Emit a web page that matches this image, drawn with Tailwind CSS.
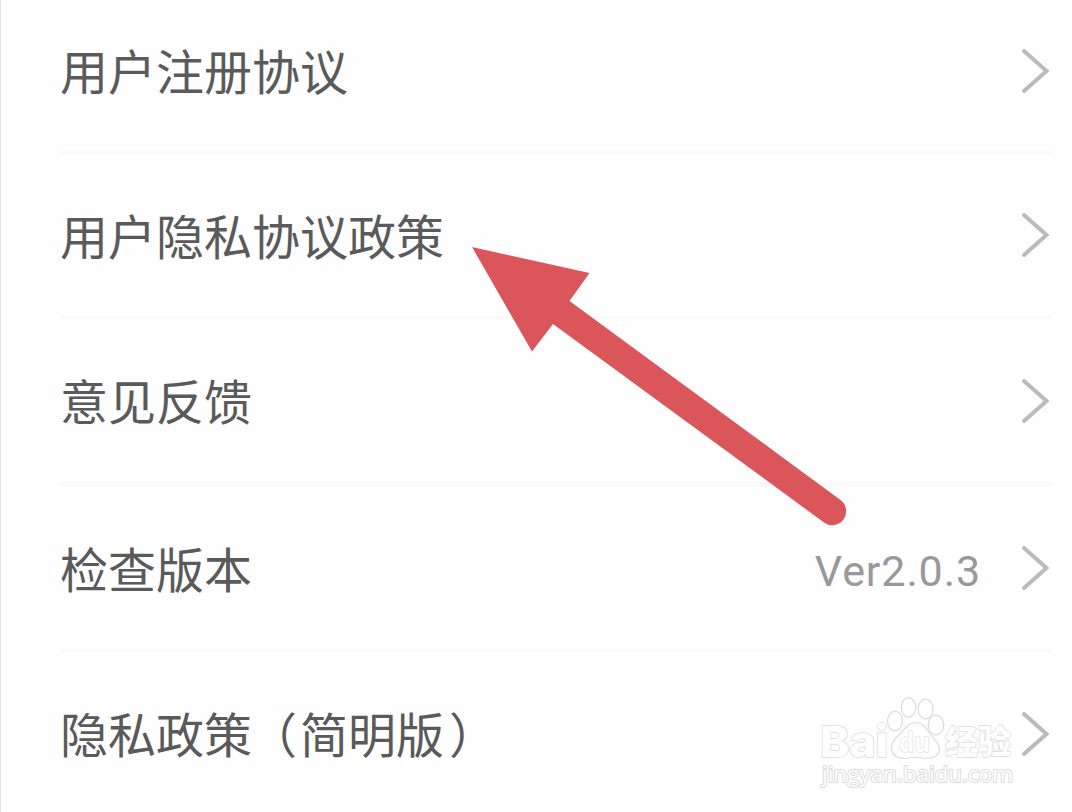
<!DOCTYPE html>
<html lang="zh-CN">
<head>
    <meta charset="UTF-8">
    <meta name="viewport" content="width=device-width, initial-scale=1.0">
    <title>设置</title>
    <script src="https://cdn.jsdelivr.net/npm/@tailwindcss/browser@4"></script>
</head>
<body class="bg-[#fefefe] overflow-hidden font-['Noto_Sans_CJK_SC',sans-serif]">
    <main class="relative h-[812px] w-[1072px] overflow-hidden border-l border-[#e4e4e4]">
        <ul class="pl-[59px] pr-5 text-[48px] leading-none text-[#5a5a5a]">
            <li class="flex h-[154px] items-center justify-between border-b-3 border-[#f9f9f9] pb-[10px]">
                <span class="pb-[3px]">用户注册协议</span>
                <svg class="mr-0.5 h-12 w-8" viewBox="0 0 32 48" fill="none" stroke="#bbbbbb" stroke-width="4" stroke-linecap="round"><path d="M6 4L28.500 24L6 44"/></svg>
            </li>
            <li class="flex h-[165px] items-center justify-between border-b-3 border-[#f9f9f9]">
                <span class="pb-[3px]">用户隐私协议政策</span>
                <svg class="mr-0.5 h-12 w-8" viewBox="0 0 32 48" fill="none" stroke="#bbbbbb" stroke-width="4" stroke-linecap="round"><path d="M6 4L28.500 24L6 44"/></svg>
            </li>
            <li class="flex h-[168px] items-center justify-between border-b-5 border-[#f9f9f9]">
                <span class="pb-[4px]">意见反馈</span>
                <svg class="mr-0.5 h-12 w-8" viewBox="0 0 32 48" fill="none" stroke="#bbbbbb" stroke-width="4" stroke-linecap="round"><path d="M6 4L28.500 24L6 44"/></svg>
            </li>
            <li class="flex h-[165px] items-center border-b-3 border-[#f9f9f9]">
                <span class="flex-1 pb-[2px]">检查版本</span>
                <span class="mr-[37px] pt-[6px] font-[Roboto,sans-serif] text-[43px] tracking-[0.9px] text-[#999999]">Ver2.0.3</span>
                <svg class="mr-0.5 h-12 w-8" viewBox="0 0 32 48" fill="none" stroke="#bbbbbb" stroke-width="4" stroke-linecap="round"><path d="M6 4L28.500 24L6 44"/></svg>
            </li>
            <li class="flex h-[163px] items-center justify-between">
                <span class="pb-[3px]">隐私政策<span class="-ml-[3px] mr-[3px]">（</span>简明版<span class="ml-[5px]">）</span></span>
                <svg class="mr-0.5 h-12 w-8" viewBox="0 0 32 48" fill="none" stroke="#bbbbbb" stroke-width="4" stroke-linecap="round"><path d="M6 4L28.500 24L6 44"/></svg>
            </li>
        </ul>

        <!-- Arrow pointing at the privacy policy row -->
        <svg class="absolute top-[240px] left-[469px] h-[290px] w-[380px]" viewBox="470 240 380 290">
            <path d="M472 247L589.500 273L569.500 301L840.500 500A13.800 13.800 0 0 1 824 522.500L553 324L532 351.500Z" fill="#da565b"/>
        </svg>

        <!-- Watermark -->
        <svg class="absolute top-[692px] left-[814px] h-[104px] w-[205px]" viewBox="815 692 205 104" fill="#fefefe" stroke="#dcdcdc" stroke-width="1.2" stroke-linejoin="round">
            <text x="820" y="757" font-size="43" font-weight="800" font-family="Inter" textLength="68" lengthAdjust="spacingAndGlyphs" stroke-width="1.500" paint-order="stroke">Bai</text>
            <ellipse cx="895" cy="721" rx="7.500" ry="9.800"/>
            <ellipse cx="908.500" cy="707.500" rx="7.200" ry="9.800"/>
            <ellipse cx="925.500" cy="709" rx="7.500" ry="9.800"/>
            <ellipse cx="936" cy="725" rx="7.800" ry="9.800"/>
            <path d="M915.500 722.500C908 722.500 904 730 899 735C893 740 890 745 892 751C894 758 901 759 908 758Q916 756.500 923 758C931 759 938 758 939.500 750C940 744 935 740 931 735C927 729 923 722.500 915.500 722.500Z"/>
            <text x="899" y="752" font-size="26" font-weight="700" font-family="Open Sans" textLength="31" lengthAdjust="spacingAndGlyphs" stroke-width="1.200" paint-order="stroke">du</text>
            <text x="945" y="754" font-size="33" font-weight="900" font-family="Noto Sans CJK SC" textLength="66" stroke-width="1.400" paint-order="stroke">经验</text>
            <text x="822" y="782" font-size="22" font-family="Open Sans" textLength="191" lengthAdjust="spacingAndGlyphs" stroke-width="2" paint-order="stroke">jingyan.baidu.com</text>
        </svg>
    </main>
</body>
</html>
